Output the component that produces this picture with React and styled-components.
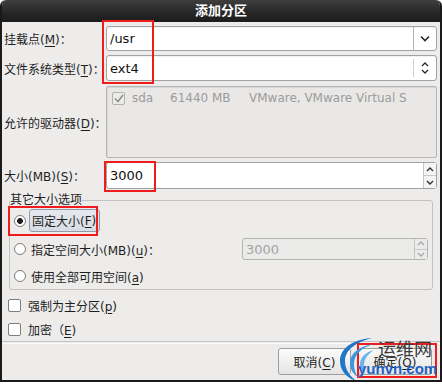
import React from 'react';
import styled, { createGlobalStyle } from 'styled-components';

const GlobalStyle = createGlobalStyle`
  html, body { margin: 0; padding: 0; background: #ffffff; }
  body { font-family: "DejaVu Sans", "Noto Sans CJK SC", sans-serif; font-size: 12px; color: #1e1e1e; }
  u { text-underline-offset: 2px; }
`;

const ChevronDown = () => (
  <svg width="10" height="7" viewBox="0 0 10 7">
    <path d="M1 1.5 L5 5.5 L9 1.5" fill="none" stroke="#2a2a2a" strokeWidth="1.6" />
  </svg>
);

const UpDown = () => (
  <svg width="8" height="14" viewBox="0 0 8 14">
    <path d="M1 5 L4 2 L7 5 M1 9 L4 12 L7 9" fill="none" stroke="#2a2a2a" strokeWidth="1.3" />
  </svg>
);

const Arrow = ({ up, color }) => (
  <svg width="8" height="5" viewBox="0 0 8 5">
    <path d={up ? 'M1 4 L4 1 L7 4' : 'M1 1 L4 4 L7 1'} fill="none" stroke={color} strokeWidth="1.4" />
  </svg>
);

function App() {
  return (
    <>
      <GlobalStyle />
      <Window>
        <TitleBar>添加分区</TitleBar>
        <Body>
          <FormRow $mt={4}>
            <Label>挂载点(<u>M</u>)：</Label>
            <Combo $h={25}>
              <ComboText>/usr</ComboText>
              <ComboButton $full>
                <ChevronDown />
              </ComboButton>
            </Combo>
          </FormRow>

          <FormRow $mt={4}>
            <Label>文件系统类型(<u>T</u>)：</Label>
            <Combo $h={26}>
              <ComboText>ext4</ComboText>
              <ComboButton>
                <UpDown />
              </ComboButton>
            </Combo>
          </FormRow>

          <FormRow $mt={5}>
            <Label>允许的驱动器(<u>D</u>)：</Label>
            <DriveFrame>
              <DriveLine>
                <CheckBox $disabled>
                  <svg width="10" height="9" viewBox="0 0 10 9">
                    <path d="M1 4.5 L4 7.5 L9 1" fill="none" stroke="#8e8e8e" strokeWidth="1.6" />
                  </svg>
                </CheckBox>
                <DriveCell $w={38}>sda</DriveCell>
                <DriveCell $w={79}>61440 MB</DriveCell>
                <DriveCell>VMware, VMware Virtual S</DriveCell>
              </DriveLine>
            </DriveFrame>
          </FormRow>

          <FormRow $mt={4}>
            <Label>大小(MB)(<u>S</u>)：</Label>
            <Spin $h={27}>
              <ComboText>3000</ComboText>
              <SpinButtons>
                <SpinHalf><Arrow up color="#333" /></SpinHalf>
                <SpinHalf $bottom><Arrow color="#333" /></SpinHalf>
              </SpinButtons>
            </Spin>
          </FormRow>

          <Group>
            <Legend>其它大小选项</Legend>
            <OptionRow $h={23} $mt={1}>
              <Radio $on />
              <FocusLabel>固定大小(<u>F</u>)</FocusLabel>
            </OptionRow>
            <OptionRow $h={22} $mt={6}>
              <Radio />
              <OptionText>指定空间大小(MB)(<u>u</u>)：</OptionText>
              <Spin $h={22} $w={186} $disabled>
                <ComboText $disabled>3000</ComboText>
                <SpinButtons>
                  <SpinHalf $disabled><Arrow up color="#aaa" /></SpinHalf>
                  <SpinHalf $bottom $disabled><Arrow color="#aaa" /></SpinHalf>
                </SpinButtons>
              </Spin>
            </OptionRow>
            <OptionRow $h={18} $mt={7}>
              <Radio />
              <OptionText>使用全部可用空间(<u>a</u>)</OptionText>
            </OptionRow>
          </Group>

          <CheckRow $mt={6}>
            <CheckBox />
            <span>强制为主分区(<u>p</u>)</span>
          </CheckRow>
          <CheckRow $mt={6}>
            <CheckBox />
            <span>加密（<u>E</u>)</span>
          </CheckRow>

          <Separator />

          <ButtonBar>
            <Button>取消(<u>C</u>)</Button>
            <Button $w={74}>确定(<u>O</u>)</Button>
          </ButtonBar>
        </Body>

        <Mark $x={102} $y={20} $w={52} $h={64} />
        <Mark $x={104} $y={161} $w={52} $h={31} />
        <Mark $x={8} $y={206} $w={90} $h={30} />
        <Mark $x={357} $y={343} $w={80} $h={35} />

        <Watermark>
          <svg width="42" height="46" viewBox="0 0 42 46">
            <path d="M36 2 C18 3 4 12 4 25 C4 35 11 42 20 45 C13 39 9 33 9 25 C9 14 20 6 36 2 Z" fill="#1e78c8" />
            <path d="M37 8 C24 10 14 17 14 27 C14 33 17 38 22 41 C19 37 18 32 18 28 C18 19 25 12 37 8 Z" fill="#3c97dc" />
            <path d="M38 14 C30 16 24 21 24 28 C24 32 26 35 29 37 C28 34 28 31 28 29 C28 23 32 18 38 14 Z" fill="#6ab4ea" />
          </svg>
          <WaterCn>运维网</WaterCn>
          <WaterEn>yunvn.com</WaterEn>
        </Watermark>
      </Window>
    </>
  );
}

export default App;

//
// STYLE

const Window = styled.div`
  position: relative;
  width: 442px;
  height: 382px;
  box-sizing: border-box;
  background: #edeceb;
  border: 2px solid #1a1a1a;
  border-top: none;
  border-radius: 6px 6px 0 0;
  display: flex;
  flex-direction: column;
  overflow: hidden;
`;

const TitleBar = styled.div`
  height: 22px;
  margin: 0 -2px;
  flex: none;
  background: linear-gradient(#3e3e3e, #262626 60%, #1c1c1c);
  color: #ffffff;
  font-weight: bold;
  font-size: 13px;
  line-height: 22px;
  text-align: center;
  border-radius: 6px 6px 0 0;
`;

const Body = styled.div`
  flex: 1;
  display: flex;
  flex-direction: column;
  padding: 0 3px 0 2px;
`;

const FormRow = styled.div`
  display: grid;
  grid-template-columns: 102px 1fr;
  align-items: center;
  margin-top: ${(p) => p.$mt}px;
`;

const Label = styled.div`
  white-space: nowrap;
  color: #1e1e1e;
`;

const Combo = styled.div`
  height: ${(p) => p.$h}px;
  box-sizing: border-box;
  display: flex;
  align-items: stretch;
  background: #ffffff;
  border: 1px solid #a2a2a2;
  border-radius: 3px;
  box-shadow: inset 0 1px 1px rgba(0, 0, 0, 0.06);
`;

const ComboText = styled.div`
  flex: 1;
  display: flex;
  align-items: center;
  padding-left: 3px;
  font-size: 13px;
  color: ${(p) => (p.$disabled ? '#a4a4a4' : '#111')};
`;

const ComboButton = styled.div`
  width: 22px;
  display: flex;
  align-items: center;
  justify-content: center;
  border-left: 1px solid ${(p) => (p.$full ? '#b4b4b4' : '#d2d2d2')};
  margin: ${(p) => (p.$full ? '0' : '3px 0')};
`;

const DriveFrame = styled.div`
  height: 72px;
  box-sizing: border-box;
  border: 1px solid #b6b6b6;
  border-radius: 2px;
  background: #e9e8e7;
  padding: 3px 0 0 5px;
  box-shadow: inset 1px 1px 0 #d6d6d6;
`;

const DriveLine = styled.div`
  display: flex;
  align-items: center;
  height: 16px;
  color: #9b9b9b;
  font-size: 12px;
`;

const DriveCell = styled.span`
  width: ${(p) => (p.$w ? `${p.$w}px` : 'auto')};
  white-space: nowrap;
  flex: none;
`;

const CheckBox = styled.span`
  width: 13px;
  height: 13px;
  box-sizing: border-box;
  flex: none;
  display: inline-flex;
  align-items: center;
  justify-content: center;
  border: 1px solid ${(p) => (p.$disabled ? '#b2b2b2' : '#7e7e7e')};
  border-radius: 2px;
  background: ${(p) => (p.$disabled ? '#ebebea' : '#ffffff')};
  margin-right: 7px;
`;

const Spin = styled.div`
  height: ${(p) => p.$h}px;
  width: ${(p) => (p.$w ? `${p.$w}px` : 'auto')};
  margin-left: ${(p) => (p.$w ? 'auto' : '0')};
  box-sizing: border-box;
  display: flex;
  align-items: stretch;
  background: ${(p) => (p.$disabled ? '#eaeae9' : '#ffffff')};
  border: 1px solid ${(p) => (p.$disabled ? '#b4b4b4' : '#a2a2a2')};
  border-radius: 3px;
`;

const SpinButtons = styled.div`
  width: 12px;
  display: flex;
  flex-direction: column;
  border-left: 1px solid #c4c4c4;
`;

const SpinHalf = styled.div`
  flex: 1;
  display: flex;
  align-items: center;
  justify-content: center;
  background: ${(p) => (p.$disabled ? '#ebebea' : '#f4f4f4')};
  border-top: ${(p) => (p.$bottom ? '1px solid #c8c8c8' : 'none')};
`;

const Group = styled.fieldset`
  margin: 4px 4px 0 5px;
  padding: 0 4px 4px 4px;
  border: 1px solid #c2c2c2;
  border-radius: 3px;
  min-width: 0;
  display: flex;
  flex-direction: column;
`;

const Legend = styled.legend`
  padding: 0;
  margin-left: -4px;
  font-size: 12px;
  line-height: 15px;
  color: #1e1e1e;
`;

const OptionRow = styled.div`
  height: ${(p) => p.$h}px;
  margin-top: ${(p) => p.$mt}px;
  display: flex;
  align-items: center;
`;

const Radio = styled.span`
  width: 12px;
  height: 12px;
  box-sizing: border-box;
  flex: none;
  border-radius: 50%;
  border: 1px solid #7c7c7c;
  background: ${(p) =>
    p.$on ? 'radial-gradient(circle, #1e1e1e 0 2.6px, #ffffff 3.2px)' : '#ffffff'};
  margin-right: ${(p) => (p.$on ? 3 : 5)}px;
`;

const FocusLabel = styled.span`
  height: 23px;
  box-sizing: border-box;
  display: inline-flex;
  align-items: center;
  padding: 0 3px 0 2px;
  background: linear-gradient(#e6e9ef, #d7dce4);
  border: 1px solid #8f9bab;
  border-radius: 3px;
`;

const OptionText = styled.span`
  white-space: nowrap;
`;

const CheckRow = styled.div`
  height: 18px;
  margin-top: ${(p) => p.$mt}px;
  padding-left: 4px;
  display: flex;
  align-items: center;
`;

const Separator = styled.div`
  margin: 3px -3px 0 -2px;
  height: 1px;
  border-top: 1px solid #c4c4c4;
  border-bottom: 1px solid #fafafa;
`;

const ButtonBar = styled.div`
  display: flex;
  justify-content: flex-end;
  gap: 7px;
  margin-top: 4px;
  padding-right: 5px;
`;

const Button = styled.button`
  width: ${(p) => p.$w || 73}px;
  height: 27px;
  font-family: inherit;
  font-size: 12px;
  color: #1e1e1e;
  border: 1px solid #9d9d9d;
  border-radius: 3px;
  background: linear-gradient(#fbfbfb, #e4e4e3);
  padding: 0;
`;

const Mark = styled.div`
  position: absolute;
  left: ${(p) => p.$x - 2}px;
  top: ${(p) => p.$y}px;
  width: ${(p) => p.$w}px;
  height: ${(p) => p.$h}px;
  box-sizing: border-box;
  border: 2px solid #ee1c1c;
  pointer-events: none;
`;

const Watermark = styled.div`
  position: absolute;
  left: 334px;
  top: 336px;
  width: 104px;
  height: 44px;
  pointer-events: none;
  svg { position: absolute; left: 0; top: 0; }
`;

const WaterCn = styled.div`
  position: absolute;
  left: 42px;
  top: 2px;
  font-family: "Noto Sans CJK SC", sans-serif;
  font-size: 18px;
  line-height: 20px;
  color: #3a3a3a;
  white-space: nowrap;
`;

const WaterEn = styled.div`
  position: absolute;
  left: 22px;
  top: 25px;
  font-family: "Liberation Sans", sans-serif;
  font-weight: bold;
  font-size: 15px;
  line-height: 15px;
  color: #1f62c4;
  white-space: nowrap;
`;
